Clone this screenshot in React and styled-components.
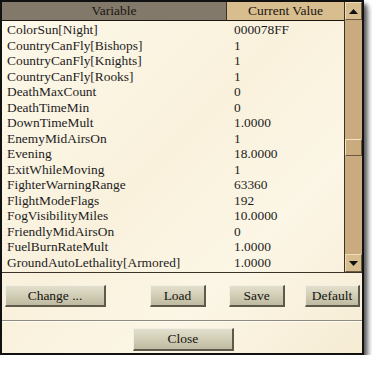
import React from "react";
import styled, { createGlobalStyle } from "styled-components";

const GlobalStyle = createGlobalStyle`
  html, body { margin: 0; padding: 0; background: #ffffff; }
  body { font-family: "Liberation Serif", "Times New Roman", serif; }
`;

const rows = [
  ["ColorSun[Night]", "000078FF"],
  ["CountryCanFly[Bishops]", "1"],
  ["CountryCanFly[Knights]", "1"],
  ["CountryCanFly[Rooks]", "1"],
  ["DeathMaxCount", "0"],
  ["DeathTimeMin", "0"],
  ["DownTimeMult", "1.0000"],
  ["EnemyMidAirsOn", "1"],
  ["Evening", "18.0000"],
  ["ExitWhileMoving", "1"],
  ["FighterWarningRange", "63360"],
  ["FlightModeFlags", "192"],
  ["FogVisibilityMiles", "10.0000"],
  ["FriendlyMidAirsOn", "0"],
  ["FuelBurnRateMult", "1.0000"],
  ["GroundAutoLethality[Armored]", "1.0000"],
];

const Dialog = styled.div`
  width: 360px;
  height: 351px;
  border: 2px solid #111;
  background: linear-gradient(135deg, #fdf8ea 0%, #f9f1dc 45%, #fcf6e6 70%, #f6ecd4 100%);
  box-shadow: 3px 4px 4px rgba(0, 0, 0, 0.55), 5px 7px 6px rgba(0, 0, 0, 0.25);
  display: flex;
  flex-direction: column;
`;

const ListBox = styled.div`
  height: 270px;
  border-bottom: 1px solid #3a3328;
  display: grid;
  grid-template-columns: 1fr 17px;
`;

const Table = styled.div`
  display: flex;
  flex-direction: column;
  border-right: 1px solid #3a3328;
  overflow: hidden;
`;

const HeaderRow = styled.div`
  display: grid;
  grid-template-columns: 225px 1fr;
  height: 18px;
  border-bottom: 1px solid #1a1710;
`;

const HeaderCell = styled.div`
  background: ${(p) => (p.$active ? "#d8bd8f" : "#83796a")};
  color: #1a1710;
  font-size: 13.5px;
  line-height: 18px;
  text-align: center;
  border-right: ${(p) => (p.$active ? "none" : "1px solid #3a3328")};
`;

const Body = styled.div`
  padding-top: 1px;
`;

const Row = styled.div`
  display: grid;
  grid-template-columns: 232px 1fr;
  height: 15.5px;
  font-size: 13.4px;
  line-height: 15.5px;
  color: #1c1c1c;
  white-space: nowrap;
`;

const Name = styled.div`
  padding-left: 5px;
`;

const Scrollbar = styled.div`
  background: #c9ab7f;
  display: flex;
  flex-direction: column;
  align-items: stretch;
`;

const ArrowButton = styled.div`
  height: 18px;
  background: #d8bd8f;
  border-top: 1px solid #eedcb7;
  border-left: 1px solid #eedcb7;
  border-bottom: 1px solid #6a5a40;
  border-right: 1px solid #6a5a40;
  box-sizing: border-box;
  display: flex;
  align-items: center;
  justify-content: center;
`;

const Track = styled.div`
  flex: 1;
  display: flex;
  flex-direction: column;
`;

const Thumb = styled.div`
  margin-top: ${(p) => p.$top}px;
  height: 17px;
  background: #caab7e;
  border-top: 1px solid #f4e3c2;
  border-left: 1px solid #f4e3c2;
  border-bottom: 1px solid #6a5a40;
  border-right: 1px solid #6a5a40;
  box-sizing: border-box;
`;

const ButtonRow = styled.div`
  display: flex;
  align-items: center;
  height: 22px;
  margin-top: 12px;
  padding-left: 3px;
`;

const Button = styled.div`
  width: ${(p) => p.$w}px;
  margin-left: ${(p) => p.$ml || 0}px;
  height: 22px;
  box-sizing: border-box;
  background: linear-gradient(180deg, #e2dfcd 0%, #d0ccb4 55%, #bfbba2 100%);
  border-top: 1px solid #f2f0e2;
  border-left: 1px solid #f2f0e2;
  border-bottom: 2px solid #5d5a4c;
  border-right: 2px solid #5d5a4c;
  font-size: 13.5px;
  line-height: 19px;
  text-align: center;
  color: #151410;
`;

const Separator = styled.div`
  margin-top: 13px;
  height: 0;
  border-top: 1px solid #8e8a7e;
  border-bottom: 1px solid #fffdf4;
`;

const Footer = styled.div`
  display: flex;
  padding-left: 131px;
  margin-top: 6px;
`;

const CloseButton = styled(Button)`
  height: 23px;
  line-height: 20px;
`;

const Triangle = ({ down }) => (
  <svg width="9" height="5" viewBox="0 0 9 5">
    <polygon points={down ? "0,0 9,0 4.5,5" : "0,5 9,5 4.5,0"} fill="#111" />
  </svg>
);

export default function App() {
  return (
    <>
      <GlobalStyle />
      <Dialog>
        <ListBox>
          <Table>
            <HeaderRow>
              <HeaderCell>Variable</HeaderCell>
              <HeaderCell $active>Current Value</HeaderCell>
            </HeaderRow>
            <Body>
              {rows.map(([name, value]) => (
                <Row key={name}>
                  <Name>{name}</Name>
                  <div>{value}</div>
                </Row>
              ))}
            </Body>
          </Table>
          <Scrollbar>
            <ArrowButton>
              <Triangle />
            </ArrowButton>
            <Track>
              <Thumb $top={119} />
            </Track>
            <ArrowButton>
              <Triangle down />
            </ArrowButton>
          </Scrollbar>
        </ListBox>
        <ButtonRow>
          <Button $w={101}>Change ...</Button>
          <Button $w={56} $ml={44}>Load</Button>
          <Button $w={56} $ml={23}>Save</Button>
          <Button $w={55} $ml={20}>Default</Button>
        </ButtonRow>
        <Separator />
        <Footer>
          <CloseButton $w={101}>Close</CloseButton>
        </Footer>
      </Dialog>
    </>
  );
}
